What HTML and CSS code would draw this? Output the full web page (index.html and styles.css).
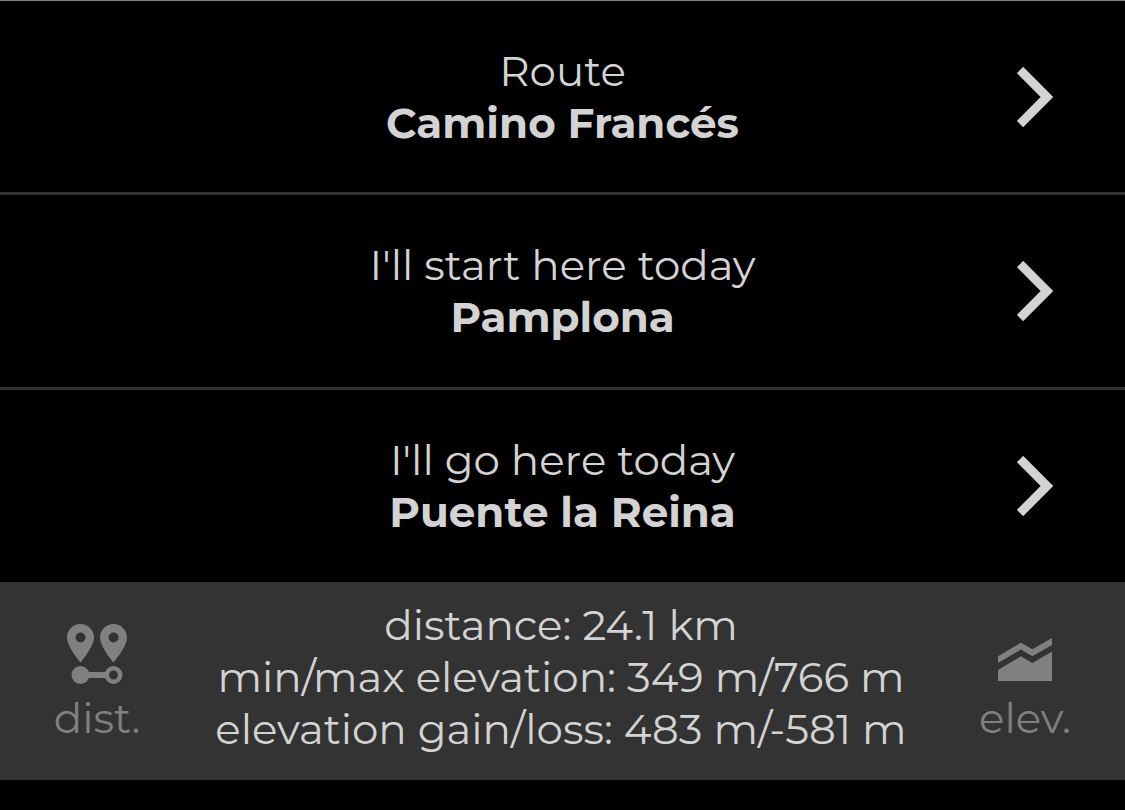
FILE: index.html
```html
<!DOCTYPE html>
<html lang="en">
<head>
    <meta charset="UTF-8">
    <meta name="viewport" content="width=device-width, initial-scale=1.0">
    <title>Route planner</title>
    <link rel="stylesheet" href="styles.css">
</head>
<body>
    <main class="planner">
        <button type="button" class="choice">
            <span class="choice-text">
                <span class="label">Route</span>
                <strong class="value">Camino Francés</strong>
            </span>
            <svg class="chevron" viewBox="0 0 36 60" aria-hidden="true">
                <path d="M3 3 30 30 3 57"/>
            </svg>
        </button>
        <button type="button" class="choice">
            <span class="choice-text">
                <span class="label">I'll start here today</span>
                <strong class="value">Pamplona</strong>
            </span>
            <svg class="chevron" viewBox="0 0 36 60" aria-hidden="true">
                <path d="M3 3 30 30 3 57"/>
            </svg>
        </button>
        <button type="button" class="choice">
            <span class="choice-text">
                <span class="label">I'll go here today</span>
                <strong class="value">Puente la Reina</strong>
            </span>
            <svg class="chevron" viewBox="0 0 36 60" aria-hidden="true">
                <path d="M3 3 30 30 3 57"/>
            </svg>
        </button>
        <section class="summary">
            <button type="button" class="mode">
                <svg class="mode-icon" viewBox="0 0 60 60" aria-hidden="true">
                    <path fill-rule="evenodd" d="M13.500 0C6 0 0 6 0 13.500 0 23 13.500 38.500 13.500 38.500S27 23 27 13.500C27 6 21 0 13.500 0zm0 8.500a5 5 0 1 1 0 10 5 5 0 0 1 0-10z"/>
                    <path fill-rule="evenodd" d="M46.500 0C39 0 33 6 33 13.500 33 23 46.500 38.500 46.500 38.500S60 23 60 13.500C60 6 54 0 46.500 0zm0 8.500a5 5 0 1 1 0 10 5 5 0 0 1 0-10z"/>
                    <circle cx="13.500" cy="51" r="9"/>
                    <path d="M13 48h27v6H13z"/>
                    <circle cx="46.500" cy="51" r="6.700" fill="none" stroke="currentColor" stroke-width="4.500"/>
                </svg>
                <span class="mode-label">dist.</span>
            </button>
            <p class="stats">
                <span>distance: 24.1 km</span>
                <span>min/max elevation: 349 m/766 m</span>
                <span>elevation gain/loss: 483 m/-581 m</span>
            </p>
            <button type="button" class="mode">
                <svg class="mode-icon" viewBox="0 0 60 60" aria-hidden="true">
                    <path d="M3 46 26 32.300 37.300 39 57 27.500V57H3z"/>
                    <path d="M3 32.300 26 18.700 37.300 25.300 57 14v7L37.300 32.300 26 25.500 3 39z"/>
                </svg>
                <span class="mode-label">elev.</span>
            </button>
        </section>
    </main>
</body>
</html>
```
FILE: styles.css
```css
* {
    box-sizing: border-box;
}
body {
    margin: 0;
    background-color: #000;
    color: #d3d3d3;
    font-family: "Montserrat", "Inter", sans-serif;
    font-size: 42px;
    font-weight: 400;
    line-height: 52px;
}
button {
    border: none;
    background: none;
    color: inherit;
    font: inherit;
    cursor: pointer;
}
.choice {
    display: grid;
    grid-template-columns: 36px 1fr 36px;
    align-items: center;
    width: 100%;
    min-height: 195px;
    padding: 0 72px;
    border-bottom: 3px solid #333;
}
.choice:first-child {
    border-top: 1px solid #808080;
}
/* the last row runs straight into the summary */
.choice:nth-child(3) {
    min-height: 192px;
    border-bottom: none;
}
.choice-text {
    grid-column: 2;
    display: flex;
    flex-direction: column;
    text-align: center;
}
.value {
    font-weight: 700;
}
.chevron {
    width: 36px;
    height: 60px;
    fill: none;
    stroke: currentColor;
    stroke-width: 9;
}
.summary {
    display: flex;
    justify-content: space-between;
    align-items: flex-start;
    padding: 17px 48px 25px 45px;
    background-color: #333;
}
.stats {
    display: flex;
    flex-direction: column;
    margin: 0;
    text-align: center;
    white-space: nowrap;
}
.mode {
    display: flex;
    flex-direction: column;
    align-items: center;
    gap: 8px;
    width: 104px;
    padding: 25px 0 0;
    color: #808080;
}
.mode-icon {
    width: 60px;
    height: 60px;
    fill: currentColor;
}
```
